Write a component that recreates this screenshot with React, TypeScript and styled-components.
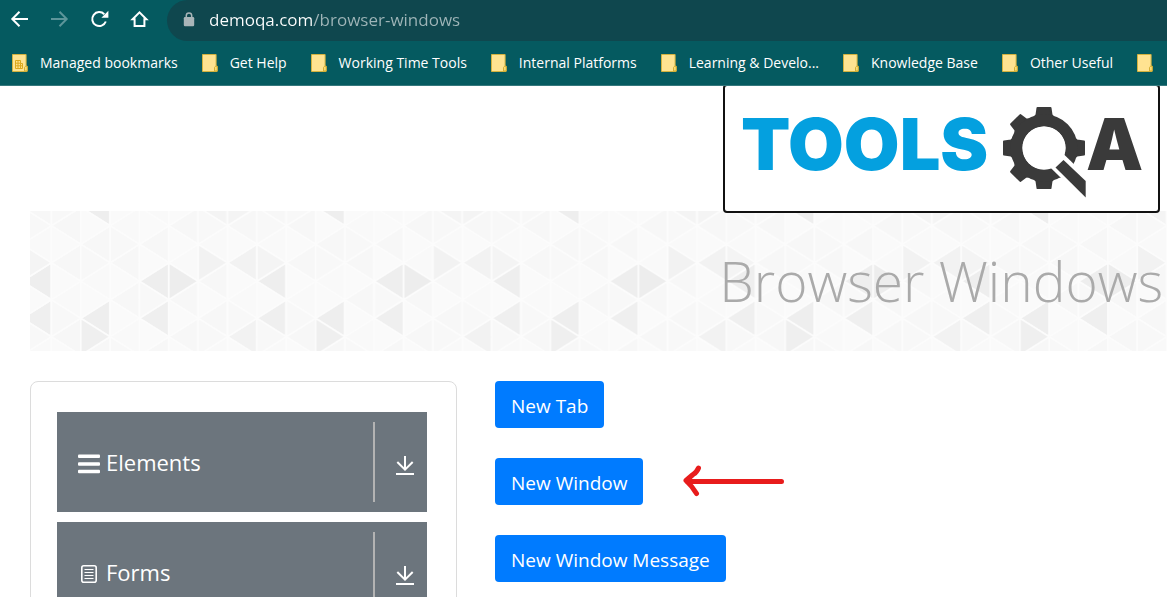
import React from "react";
import styled, { createGlobalStyle } from "styled-components";

const GlobalStyle = createGlobalStyle`
  * { box-sizing: border-box; }
  body {
    margin: 0;
    background: #fff;
    color: #fff;
    font-family: "Segoe UI", "Open Sans", "Noto Sans", sans-serif;
  }
  button { font-family: inherit; border: 0; cursor: pointer; }
  svg { display: block; flex: none; overflow: visible; }
`;

const Page = styled.div`
  height: 100vh;
  display: flex;
  flex-direction: column;
  overflow: hidden;
`;

const Chrome = styled.header`
  flex: none;
  position: relative;
  z-index: 2;
  background: #055a60;
  border-bottom: 1px solid #35787d;
`;

const NavRow = styled.div`
  display: flex;
  height: 41px;
`;

const NavButtons = styled.div`
  display: flex;
  align-items: center;
  gap: 20px;
  padding: 0 17px 3px 10px;
`;

const NavButton = styled.button`
  width: 20px;
  height: 20px;
  padding: 0;
  background: none;
  color: #fff;
  &:disabled { color: #5d959a; }
`;

const AddressBar = styled.label`
  flex: 1;
  display: flex;
  align-items: center;
  gap: 14px;
  padding: 0 0 2px 16px;
  background: #0f474e;
  border-radius: 21px 0 0 21px;
`;

const AddressInput = styled.input`
  flex: 1;
  min-width: 0;
  padding: 0;
  border: 0;
  outline: 0;
  font: 17px/24px "Segoe UI", "Open Sans", "Noto Sans", sans-serif;
  color: transparent;
  background: linear-gradient(90deg, #fff 103px, #9fb5b8 103px);
  background-clip: text;
  -webkit-background-clip: text;
`;

const Bookmarks = styled.nav`
  display: flex;
  align-items: center;
  gap: 24px;
  height: 44px;
  padding-left: 12px;
  overflow: hidden;
`;

const Bookmark = styled.a`
  flex: none;
  display: flex;
  align-items: center;
  gap: 12px;
  color: #fff;
  font-size: 14px;
  line-height: 20px;
  text-decoration: none;
  white-space: nowrap;
`;

const SiteHeader = styled.div`
  flex: none;
  display: flex;
  justify-content: flex-end;
  padding-right: 7px;
`;

const LogoLink = styled.a`
  position: relative;
  z-index: 1;
  margin: -2px 0;
  padding: 21px 15px 13px 18px;
  background: #fff;
  border: 2px solid #111;
  border-radius: 4px;
`;

const Banner = styled.section`
  flex: none;
  position: relative;
  display: flex;
  align-items: center;
  justify-content: flex-end;
  height: 140px;
  margin-left: 30px;
  padding-right: 4px;
`;

const BannerPattern = styled.svg`
  position: absolute;
  inset: 0;
  width: 100%;
  height: 100%;
`;

const Title = styled.h1`
  position: relative;
  margin: 0;
  color: #aaa;
  font-size: 55px;
  font-weight: 300;
  line-height: 72px;
  white-space: nowrap;
`;

const Content = styled.main`
  flex: 1;
  display: grid;
  grid-template-columns: minmax(280px, 427px) 1fr;
  gap: 38px;
  padding: 30px 30px 0;
`;

const Sidebar = styled.aside`
  display: flex;
  flex-direction: column;
  gap: 10px;
  padding: 30px 29px 30px 26px;
  border: 1px solid #dcdcdc;
  border-radius: 8px;
`;

const Group = styled.button`
  flex: none;
  display: flex;
  height: 100px;
  padding: 10px 0;
  background: #6c757d;
  color: #fff;
`;

const GroupLabel = styled.span`
  flex: 1;
  display: flex;
  align-items: center;
  gap: 6px;
  padding-left: 21px;
  font-size: 22px;
  line-height: 32px;
`;

const GroupIcon = styled.span`
  padding-top: 4px;
`;

const GroupToggle = styled.span`
  display: flex;
  align-items: center;
  padding: 6px 13px 0 21px;
  border-left: 2px solid #b3b3b3;
`;

const Actions = styled.section`
  display: flex;
  flex-direction: column;
  gap: 30px;
`;

const ActionRow = styled.div`
  display: flex;
  align-items: center;
  gap: 40px;
`;

const ActionButton = styled.button`
  height: 47px;
  padding: 3px 16px 0;
  border-radius: 4px;
  background: #007bff;
  color: #fff;
  font-size: 19px;
  line-height: 28px;
  white-space: nowrap;
`;

const FolderIcon = ({ managed = false }: { managed?: boolean }) => (
  <svg width="16" height="18" viewBox="0 0 16 18">
    <path d="M.5.5h13.6v11.6h1v5.4H.5z" fill="#ffe391" stroke="#d3b23f" />
    <path d="M12.6 17v-3.6l1-1.2h1.6V17z" fill="#ffe27c" stroke="#cfa92f" />
    {managed && (
      <path
        d="M3.5 14.5v-8h5v3h2v5zM3.5 9.2h5M3.5 11.8h7M6 6.5v8M8.5 9.5v5"
        fill="none"
        stroke="#dda81c"
      />
    )}
  </svg>
);

const LINES_A = [14.7, 51.7, 88.7, 125.7, 162.7];
const LINES_B = [-3.7, 33.3, 70.3, 107.3, 144.3];
const COLUMN = 29.35;

// Shaded cells, keyed by column, pointing direction and rounded tip height.
const SHADES: Record<string, string> = {
  "0L70": "#eeeeee", "0L107": "#efefef", "0R52": "#f4f4f4",
  "2L-4": "#eeeeee", "2L107": "#eeeeee", "2R126": "#efefef",
  "4L70": "#eeeeee", "4L107": "#efefef",
  "5R70": "#ededed",
  "6R52": "#f2f2f2", "6L-4": "#f4f4f4",
  "7L52": "#f2f2f2", "7L126": "#f2f2f2", "7R-4": "#f4f4f4",
};

const cells = Array.from({ length: 8 }).flatMap((_, col) => {
  const left = col * COLUMN;
  const right = left + COLUMN;
  const leftYs = col % 2 === 0 ? LINES_B : LINES_A;
  const rightYs = col % 2 === 0 ? LINES_A : LINES_B;
  return [
    ...leftYs.map((y) => ({
      key: `${col}L${Math.round(y)}`,
      points: `${left},${y} ${right},${y - 18.5} ${right},${y + 18.5}`,
      base: (col + Math.round(y)) % 3 === 0 ? "#f9f9f9" : "#f7f7f7",
    })),
    ...rightYs.map((y) => ({
      key: `${col}R${Math.round(y)}`,
      points: `${right},${y} ${left},${y - 18.5} ${left},${y + 18.5}`,
      base: (col + Math.round(y)) % 3 === 0 ? "#f8f8f8" : "#fafafa",
    })),
  ];
});

const TrianglePattern = () => (
  <BannerPattern aria-hidden="true">
    <defs>
      <pattern id="triangles" x="-8" width="234.8" height="170" patternUnits="userSpaceOnUse">
        <rect width="235" height="170" fill="#fafafa" />
        {cells.map((c) => (
          <polygon key={c.key} points={c.points} fill={SHADES[c.key] ?? c.base} stroke="#fcfcfc" strokeWidth="1.8" strokeLinejoin="round" />
        ))}
      </pattern>
    </defs>
    <rect width="100%" height="100%" fill="url(#triangles)" />
  </BannerPattern>
);

const Logo = () => (
  <svg width="400" height="91" viewBox="0 0 400 91">
    <text x="-2" y="63" fill="#04a0df" fontFamily="Inter, sans-serif" fontWeight="900" fontSize="72">TOOLS</text>
    <g transform="translate(301 41)" fill="#3a3a3a" stroke="#3a3a3a" strokeWidth="2" strokeLinejoin="round">
      {[0, 90, 135, 180, 225, 270, 315].map((a) => (
        <path key={a} d="M-11 -29 -7.5 -33 -6.500 -40h13L7.500 -33 11 -29z" transform={`rotate(${a})`} />
      ))}
      <circle r="27.500" fill="none" strokeWidth="12" />
    </g>
    <path d="M308 48 345 84" stroke="#fff" strokeWidth="19" />
    <circle cx="301" cy="41" r="21.500" fill="#fff" />
    <path d="M312.500 60.500 320.500 53 342.700 74v16.500z" fill="#3a3a3a" />
    <text x="343" y="63" fill="#3a3a3a" fontFamily="Inter, sans-serif" fontWeight="900" fontSize="72">A</text>
  </svg>
);

const DownIcon = () => (
  <svg width="18" height="19" viewBox="0 0 18 19" fill="none" stroke="#fff" strokeWidth="2">
    <path d="M9 0v14M1.300 6 9 13.700 16.700 6M0 18h18" />
  </svg>
);

const BarsIcon = () => (
  <svg width="22" height="20" viewBox="0 0 22 20" fill="#fff">
    <rect y="0.500" width="22" height="3.500" rx="1" />
    <rect y="8.200" width="22" height="3.500" rx="1" />
    <rect y="15.800" width="22" height="3.500" rx="1" />
  </svg>
);

const FormIcon = () => (
  <svg width="22" height="18" viewBox="0 0 22 18" fill="none" stroke="#fff">
    <rect x="3.800" y="0.800" width="14.400" height="16.400" rx="2" strokeWidth="1.600" />
    <path d="M6.500 4.500h9M6.500 7.500h9M6.500 10.500h9M6.500 13.500h9" />
  </svg>
);

const PointerArrow = () => (
  <svg width="102" height="32" viewBox="0 0 102 32" fill="none" stroke="#e81c1c" strokeLinecap="round" strokeLinejoin="round" strokeWidth="5" aria-hidden="true">
    <path d="M4 15.500H98.500M15.500 2Q14 6 10 8.500L3 14.500Q9 20 13.500 27.500" />
  </svg>
);

const bookmarks = [
  "Managed bookmarks",
  "Get Help",
  "Working Time Tools",
  "Internal Platforms",
  "Learning & Develo...",
  "Knowledge Base",
  "Other Useful",
];

export default function App() {
  return (
    <Page>
      <GlobalStyle />
      <Chrome>
        <NavRow>
          <NavButtons>
            <NavButton aria-label="Back">
              <svg width="20" height="20" fill="none" stroke="currentColor" strokeWidth="2">
                <path d="M18 10H2.500M9.500 2.800 2.300 10l7.200 7.200" />
              </svg>
            </NavButton>
            <NavButton aria-label="Forward" disabled>
              <svg width="20" height="20" fill="none" stroke="currentColor" strokeWidth="2">
                <path d="M1 10h15.500M9.500 2.800 16.700 10l-7.200 7.200" />
              </svg>
            </NavButton>
            <NavButton aria-label="Reload">
              <svg width="20" height="20" fill="none" stroke="currentColor" strokeWidth="2">
                <path d="M15.800 12.500A7 7 0 1 1 14.300 5.200" />
                <path d="M18.400 1.800v7h-7z" fill="currentColor" stroke="none" />
              </svg>
            </NavButton>
            <NavButton aria-label="Home">
              <svg width="20" height="20" fill="none" stroke="currentColor" strokeWidth="2">
                <path d="M2.600 10.300 9.500 3.400l6.900 6.900h-2V17H4.600v-6.700z" />
              </svg>
            </NavButton>
          </NavButtons>
          <AddressBar>
            <svg width="12" height="15" viewBox="0 0 12 15" aria-hidden="true">
              <path d="M3.300 6V3.600a2.700 2.700 0 0 1 5.400 0V6" fill="none" stroke="#a9b5b8" strokeWidth="1.500" />
              <rect x="0.800" y="5" width="10.400" height="9.200" rx="1.200" fill="#a9b5b8" />
            </svg>
            <AddressInput aria-label="Address" defaultValue="demoqa.com/browser-windows" />
          </AddressBar>
        </NavRow>
        <Bookmarks aria-label="Bookmarks">
          {bookmarks.map((name, i) => (
            <Bookmark key={name} href="#">
              <FolderIcon managed={i === 0} />
              {name}
            </Bookmark>
          ))}
          <Bookmark href="#" aria-label="More bookmarks">
            <FolderIcon />
          </Bookmark>
        </Bookmarks>
      </Chrome>

      <SiteHeader>
        <LogoLink href="#" aria-label="Home page">
          <Logo />
        </LogoLink>
      </SiteHeader>

      <Banner>
        <TrianglePattern />
        <Title>Browser Windows</Title>
      </Banner>

      <Content>
        <Sidebar>
          <Group>
            <GroupLabel>
              <GroupIcon><BarsIcon /></GroupIcon>
              Elements
            </GroupLabel>
            <GroupToggle><DownIcon /></GroupToggle>
          </Group>
          <Group>
            <GroupLabel>
              <GroupIcon><FormIcon /></GroupIcon>
              Forms
            </GroupLabel>
            <GroupToggle><DownIcon /></GroupToggle>
          </Group>
        </Sidebar>
        <Actions>
          <ActionRow>
            <ActionButton>New Tab</ActionButton>
          </ActionRow>
          <ActionRow>
            <ActionButton>New Window</ActionButton>
            <PointerArrow />
          </ActionRow>
          <ActionRow>
            <ActionButton>New Window Message</ActionButton>
          </ActionRow>
        </Actions>
      </Content>
    </Page>
  );
}
